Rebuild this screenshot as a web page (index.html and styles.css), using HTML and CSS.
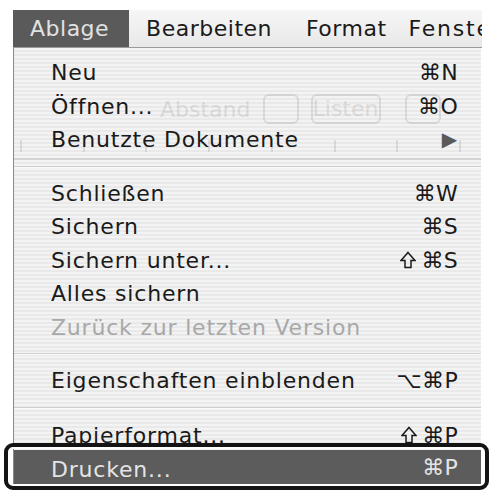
FILE: index.html
```html
<!DOCTYPE html>
<html lang="de">
<head>
    <meta charset="UTF-8">
    <meta name="viewport" content="width=device-width, initial-scale=1.0">
    <title>Ablage</title>
    <link rel="stylesheet" href="styles.css">
</head>
<body>
    <div class="screen">
        <div class="menubar">
            <span class="title open">Ablage</span>
            <span class="title">Bearbeiten</span>
            <span class="title fmt">Format</span>
            <span class="title win">Fenster</span>
        </div>

        <div class="panel">
            <!-- faint window content showing through the menu -->
            <div class="ghost">
                <div class="ghost-bar">
                    <span class="ghost-label">Abstand</span>
                    <span class="ghost-box small"></span>
                    <span class="ghost-box wide">Listen</span>
                    <span class="ghost-box small push"></span>
                </div>
                <div class="ghost-ruler">
                    <i></i><i></i><i></i><i></i><i></i><i></i><i></i><i></i>
                </div>
            </div>

            <div class="row"><span>Neu</span><span class="key">⌘N</span></div>
            <div class="row"><span>Öffnen...</span><span class="key">⌘O</span></div>
            <div class="row"><span>Benutzte Dokumente</span><span class="arrow">▶</span></div>
            <div class="sep"></div>
            <div class="row"><span>Schließen</span><span class="key">⌘W</span></div>
            <div class="row"><span>Sichern</span><span class="key">⌘S</span></div>
            <div class="row">
                <span>Sichern unter...</span>
                <span class="key"><svg class="shift" width="16" height="18" viewBox="0 0 16 18"><path d="M8 1.5 L15 9.5 H11 V16.5 H5 V9.5 H1 Z"/></svg>⌘S</span>
            </div>
            <div class="row"><span>Alles sichern</span></div>
            <div class="row disabled"><span>Zurück zur letzten Version</span></div>
            <div class="sep"></div>
            <div class="row"><span>Eigenschaften einblenden</span><span class="key">⌥⌘P</span></div>
            <div class="sep last"></div>
            <div class="row">
                <span>Papierformat...</span>
                <span class="key"><svg class="shift" width="16" height="18" viewBox="0 0 16 18"><path d="M8 1.5 L15 9.5 H11 V16.5 H5 V9.5 H1 Z"/></svg>⌘P</span>
            </div>
            <div class="row active"><span>Drucken...</span><span class="key">⌘P</span></div>
        </div>

        <div class="callout"></div>
    </div>
</body>
</html>
```

FILE: styles.css
```css
body {
    margin: 0;
    background: #fff;
    font-family: "DejaVu Sans", "Liberation Sans", sans-serif;
    font-size: 22px;
    letter-spacing: 0.8px;
    color: #1a1a1a;
}
.screen {
    position: relative;
    width: 493px;
    height: 498px;
    overflow: hidden;
    padding-top: 10px;
    box-sizing: border-box;
}
.menubar {
    display: flex;
    margin-left: 13px;
    width: 469px;
    height: 37px;
    line-height: 37px;
    overflow: hidden;
    white-space: nowrap;
    letter-spacing: 0.5px;
    background: linear-gradient(#f6f6f6, #e8e8e8);
    border-bottom: 1px solid #9a9a9a;
}
.menubar .title {
    padding: 0 17px;
}
.menubar .title.open {
    padding-right: 20px;
    background: #5a5a5a;
    color: #e2e2e2;
}
.menubar .title.fmt {
    padding-right: 5px;
}
.menubar .title.win {
    letter-spacing: 1.8px;
}
.panel {
    position: relative;
    margin-left: 13px;
    width: 467px;
    padding-top: 8px;
    border-left: 1px solid #8a8a8a;
    background: repeating-linear-gradient(#f3f3f3 0, #f3f3f3 2px, #e9e9e9 2px, #e9e9e9 4px);
}
.row {
    position: relative;
    display: flex;
    justify-content: space-between;
    height: 33.5px;
    line-height: 33.5px;
    padding: 0 23px 0 37px;
    white-space: nowrap;
}
.row .key {
    display: flex;
    align-items: center;
    letter-spacing: 0.3px;
}
.shift {
    margin-right: 5px;
    fill: none;
    stroke: #1a1a1a;
    stroke-width: 1.5;
}
.row .arrow {
    font-size: 20px;
    color: #5a5a5a;
}
.row.disabled {
    color: #a8a8a8;
}
.row.active {
    margin-top: -2px;
    height: 35px;
    line-height: 40px;
    background: #5c5c5c;
    color: #e4e4e4;
}
.sep {
    height: 20px;
    position: relative;
}
.sep.last {
    height: 21px;
}
.sep::after {
    content: "";
    position: absolute;
    left: 0;
    right: 0;
    top: 9px;
    border-top: 1px solid #cfcfcf;
    border-bottom: 1px solid #fafafa;
}
.ghost {
    position: absolute;
    left: 0;
    right: 0;
    top: 46px;
    opacity: 0.09;
    color: #000;
    letter-spacing: 0;
}
.ghost-bar {
    display: flex;
    align-items: center;
    gap: 12px;
    height: 30px;
    padding-left: 146px;
}
.ghost-box {
    border: 2px solid #000;
    border-radius: 6px;
    height: 26px;
    line-height: 26px;
    text-align: center;
}
.ghost-box.small {
    width: 32px;
}
.ghost-box.wide {
    width: 66px;
}
.ghost-box.push {
    margin-left: 12px;
}
.ghost-ruler {
    display: flex;
    justify-content: space-between;
    height: 34px;
    padding: 0 20px 0 6px;
    border-bottom: 2px solid #000;
}
.ghost-ruler i {
    width: 2px;
    height: 12px;
    margin-top: 16px;
    background: #000;
}
.callout {
    position: absolute;
    left: 4px;
    top: 443px;
    width: 477px;
    height: 39px;
    border: 4px solid #141414;
    border-radius: 9px;
    box-shadow: inset 0 0 0 2px #fff;
}
```
